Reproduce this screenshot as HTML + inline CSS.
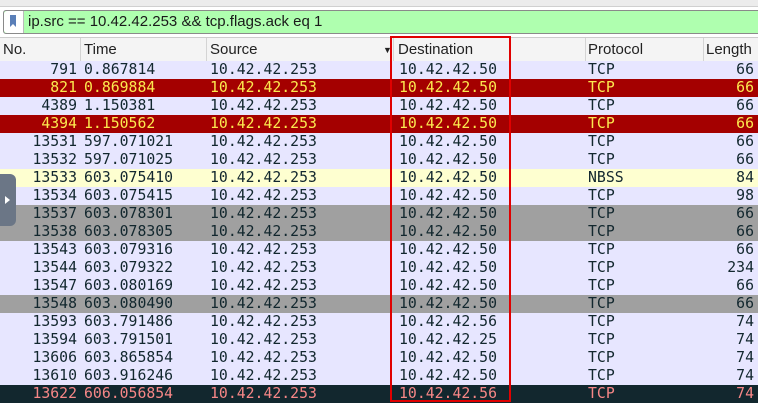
<!DOCTYPE html>
<html><head><style>
body{margin:0;width:758px;height:416px;background:#fff;position:relative;overflow:hidden;font-family:"Liberation Sans","DejaVu Sans",sans-serif}
.top{position:absolute;left:0;top:0;width:758px;height:6px;background:#ececec;border-bottom:1px solid #d0d0d0}
.filter{position:absolute;left:3px;top:10px;width:760px;height:22px;background:#afffaf;border:1px solid #8a8a8a;border-radius:3px}
.bm{position:absolute;left:0;top:0;width:19px;height:22px;background:#fff;border-right:1px solid #bbb;border-radius:3px 0 0 3px}
.bm i{position:absolute;left:6px;top:4px;width:6px;height:12px;background:#5a7fb8;clip-path:polygon(0 0,100% 0,100% 100%,50% 75%,0 100%)}
.ftxt{position:absolute;left:24px;top:2px;font-size:15px;color:#1a1a1a}
.hdr{position:absolute;left:0;top:37px;width:758px;height:24px;background:#f4f4f4;border-top:1px solid #ccc;border-bottom:1px solid #ccc;font-size:15px;color:#222}
.hdr span{position:absolute;top:3px}
.sep{position:absolute;top:0;width:1px;height:24px;background:#d4d4d4}
.row{position:absolute;left:0;width:758px;height:18px;font-family:"DejaVu Sans Mono","Liberation Mono",monospace;font-size:14.8px;line-height:18px;color:#12272e}
.row span{position:absolute;top:0;white-space:pre}
.n{right:681px;text-align:right}
.t{left:84px}.s{left:210px}.d{left:399px}.p{left:588px}.l{right:4px}
.a{background:#e7e6ff}.r{background:#a40000;color:#fce94f}.y{background:#feffd0}.g{background:#a0a0a0}.k{background:#12272e;color:#f78787}
.box{position:absolute;left:390px;top:36px;width:117px;height:362px;border:2px solid #e00000}
.side{position:absolute;left:0;top:174px;width:16px;height:52px;background:#6b7686;border-radius:0 6px 6px 0}
.side b{position:absolute;left:5px;top:22px;width:0;height:0;border-left:5px solid #fff;border-top:4px solid transparent;border-bottom:4px solid transparent}
</style></head><body>
<div class="top"></div>
<div class="filter"><div class="bm"><i></i></div><div class="ftxt">ip.src == 10.42.42.253 &amp;&amp; tcp.flags.ack eq 1</div></div>
<div class="hdr">
<span style="left:3px">No.</span><div class="sep" style="left:80px"></div>
<span style="left:84px">Time</span><div class="sep" style="left:206px"></div>
<span style="left:210px">Source</span><span style="left:383px;font-size:9px;top:7px">▼</span><div class="sep" style="left:393px"></div>
<span style="left:398px">Destination</span><div class="sep" style="left:585px"></div>
<span style="left:588px">Protocol</span><div class="sep" style="left:703px"></div>
<span style="left:706px">Length</span>
</div>
<div class="row a" style="top:61px"><span class="n">791</span><span class="t">0.867814</span><span class="s">10.42.42.253</span><span class="d">10.42.42.50</span><span class="p">TCP</span><span class="l">66</span></div>
<div class="row r" style="top:79px"><span class="n">821</span><span class="t">0.869884</span><span class="s">10.42.42.253</span><span class="d">10.42.42.50</span><span class="p">TCP</span><span class="l">66</span></div>
<div class="row a" style="top:97px"><span class="n">4389</span><span class="t">1.150381</span><span class="s">10.42.42.253</span><span class="d">10.42.42.50</span><span class="p">TCP</span><span class="l">66</span></div>
<div class="row r" style="top:115px"><span class="n">4394</span><span class="t">1.150562</span><span class="s">10.42.42.253</span><span class="d">10.42.42.50</span><span class="p">TCP</span><span class="l">66</span></div>
<div class="row a" style="top:133px"><span class="n">13531</span><span class="t">597.071021</span><span class="s">10.42.42.253</span><span class="d">10.42.42.50</span><span class="p">TCP</span><span class="l">66</span></div>
<div class="row a" style="top:151px"><span class="n">13532</span><span class="t">597.071025</span><span class="s">10.42.42.253</span><span class="d">10.42.42.50</span><span class="p">TCP</span><span class="l">66</span></div>
<div class="row y" style="top:169px"><span class="n">13533</span><span class="t">603.075410</span><span class="s">10.42.42.253</span><span class="d">10.42.42.50</span><span class="p">NBSS</span><span class="l">84</span></div>
<div class="row a" style="top:187px"><span class="n">13534</span><span class="t">603.075415</span><span class="s">10.42.42.253</span><span class="d">10.42.42.50</span><span class="p">TCP</span><span class="l">98</span></div>
<div class="row g" style="top:205px"><span class="n">13537</span><span class="t">603.078301</span><span class="s">10.42.42.253</span><span class="d">10.42.42.50</span><span class="p">TCP</span><span class="l">66</span></div>
<div class="row g" style="top:223px"><span class="n">13538</span><span class="t">603.078305</span><span class="s">10.42.42.253</span><span class="d">10.42.42.50</span><span class="p">TCP</span><span class="l">66</span></div>
<div class="row a" style="top:241px"><span class="n">13543</span><span class="t">603.079316</span><span class="s">10.42.42.253</span><span class="d">10.42.42.50</span><span class="p">TCP</span><span class="l">66</span></div>
<div class="row a" style="top:259px"><span class="n">13544</span><span class="t">603.079322</span><span class="s">10.42.42.253</span><span class="d">10.42.42.50</span><span class="p">TCP</span><span class="l">234</span></div>
<div class="row a" style="top:277px"><span class="n">13547</span><span class="t">603.080169</span><span class="s">10.42.42.253</span><span class="d">10.42.42.50</span><span class="p">TCP</span><span class="l">66</span></div>
<div class="row g" style="top:295px"><span class="n">13548</span><span class="t">603.080490</span><span class="s">10.42.42.253</span><span class="d">10.42.42.50</span><span class="p">TCP</span><span class="l">66</span></div>
<div class="row a" style="top:313px"><span class="n">13593</span><span class="t">603.791486</span><span class="s">10.42.42.253</span><span class="d">10.42.42.56</span><span class="p">TCP</span><span class="l">74</span></div>
<div class="row a" style="top:331px"><span class="n">13594</span><span class="t">603.791501</span><span class="s">10.42.42.253</span><span class="d">10.42.42.25</span><span class="p">TCP</span><span class="l">74</span></div>
<div class="row a" style="top:349px"><span class="n">13606</span><span class="t">603.865854</span><span class="s">10.42.42.253</span><span class="d">10.42.42.50</span><span class="p">TCP</span><span class="l">74</span></div>
<div class="row a" style="top:367px"><span class="n">13610</span><span class="t">603.916246</span><span class="s">10.42.42.253</span><span class="d">10.42.42.50</span><span class="p">TCP</span><span class="l">74</span></div>
<div class="row k" style="top:385px"><span class="n">13622</span><span class="t">606.056854</span><span class="s">10.42.42.253</span><span class="d">10.42.42.56</span><span class="p">TCP</span><span class="l">74</span></div>
<div class="side"><b></b></div>
<div class="box"></div>
</body></html>
